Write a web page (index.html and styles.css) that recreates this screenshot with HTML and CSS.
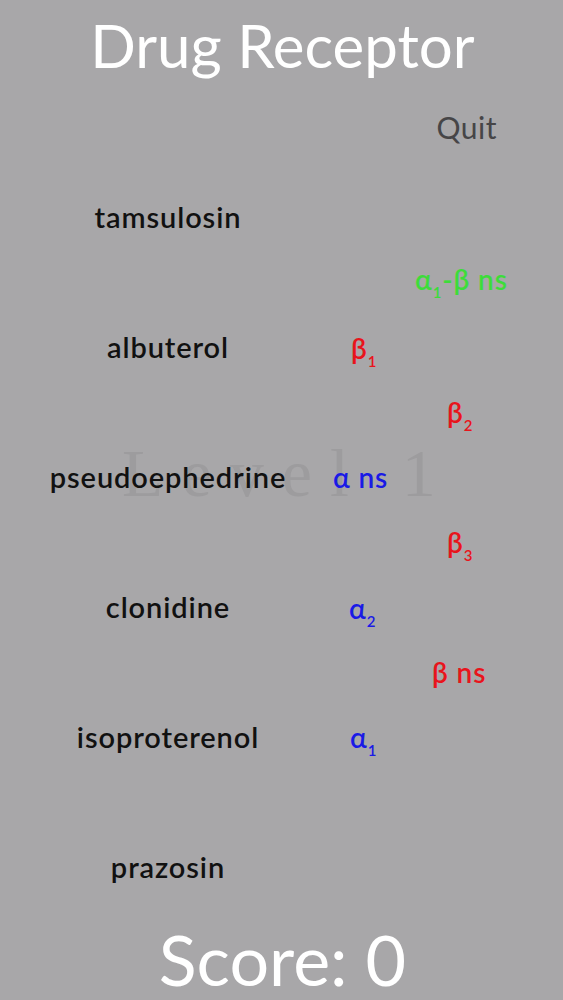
FILE: index.html
```html
<!DOCTYPE html>
<html>
<head>
<meta charset="utf-8">
<link rel="stylesheet" href="styles.css">
</head>
<body>
<div class="screen">
  <div class="watermark">Level 1</div>
  <h1 class="title">Drug Receptor</h1>
  <div class="quit-row"><span class="quit">Quit</span></div>
  <ul class="drugs">
    <li>tamsulosin</li>
    <li>albuterol</li>
    <li>pseudoephedrine</li>
    <li>clonidine</li>
    <li>isoproterenol</li>
    <li>prazosin</li>
  </ul>
  <div class="rc green r-a1b">α<sub>1</sub>-β ns</div>
  <div class="rc red r-b1">β<sub>1</sub></div>
  <div class="rc red r-b2">β<sub>2</sub></div>
  <div class="rc blue r-ans">α ns</div>
  <div class="rc red r-b3">β<sub>3</sub></div>
  <div class="rc blue r-a2">α<sub>2</sub></div>
  <div class="rc red r-bns">β ns</div>
  <div class="rc blue r-a1">α<sub>1</sub></div>
  <div class="score">Score: 0</div>
</div>
</body>
</html>
```
FILE: styles.css
```css
html, body {
  margin: 0;
  padding: 0;
  background: #a8a7a9;
}
.screen {
  position: relative;
  width: 563px;
  height: 1000px;
  overflow: hidden;
  display: flex;
  flex-direction: column;
  font-family: "Lato", "Noto Sans", sans-serif;
}
.title {
  margin: 0;
  padding-top: 10px;
  font-size: 60px;
  line-height: 70px;
  font-weight: 400;
  color: #ffffff;
  text-align: center;
  padding-left: 2px;
}
.quit-row {
  display: flex;
  justify-content: flex-end;
  padding-right: 66px;
  margin-top: 30px;
}
.quit {
  font-size: 30px;
  line-height: 34px;
  letter-spacing: 0.5px;
  color: #464547;
}
.drugs {
  position: relative;
  z-index: 1;
  list-style: none;
  margin: 58px 0 0 0;
  padding: 0;
  width: 336px;
  display: flex;
  flex-direction: column;
  gap: 100px;
}
.drugs li {
  text-align: center;
  font-size: 29px;
  line-height: 30px;
  font-weight: 600;
  letter-spacing: 0.9px;
  color: #111111;
}
.watermark {
  position: absolute;
  z-index: 0;
  left: 122px;
  top: 438px;
  font-family: "Liberation Serif", serif;
  font-size: 68px;
  line-height: 70px;
  letter-spacing: 18px;
  color: #9d9c9e;
}
.rc {
  position: absolute;
  z-index: 1;
  font-size: 28px;
  line-height: 30px;
  font-weight: 600;
  letter-spacing: 0.9px;
  white-space: nowrap;
}
.rc sub {
  font-size: 15px;
  vertical-align: -8px;
  line-height: 0;
}
.green { color: #3ddc3a; }
.red { color: #e8141c; }
.blue { color: #1a1ae6; }
.r-a1b { left: 415px; top: 264px; }
.r-b1 { left: 351px; top: 333px; }
.r-b2 { left: 447px; top: 397px; }
.r-ans { left: 333px; top: 462px; }
.r-b3 { left: 447px; top: 527px; }
.r-a2 { left: 349px; top: 593px; }
.r-bns { left: 432px; top: 657px; }
.r-a1 { left: 350px; top: 722px; }
.score {
  margin-top: auto;
  padding-bottom: 6px;
  text-align: center;
  font-size: 70px;
  line-height: 70px;
  color: #ffffff;
  padding-left: 2px;
}
```
